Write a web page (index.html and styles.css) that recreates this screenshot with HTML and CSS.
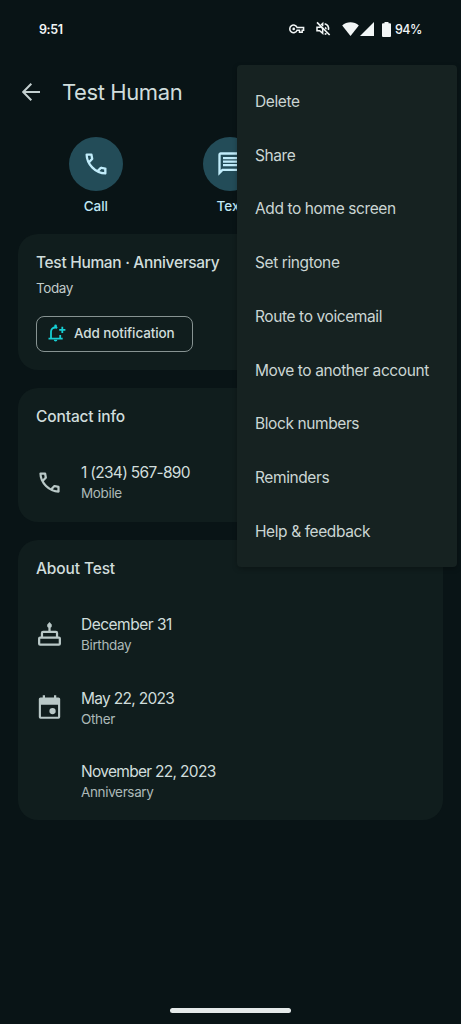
FILE: index.html
```html
<!DOCTYPE html>
<html lang="en">
<head>
<meta charset="utf-8">
<title>Test Human</title>
<link rel="stylesheet" href="styles.css">
</head>
<body>
<div class="screen">
  <header class="status">
    <span class="clock">9:51</span>
    <div class="indicators">
      <svg class="key" viewBox="0 0 16 10"><path d="M8.1 3.500H14.600V6.300H13.200V8.300H10.500V6.300H8.100A3.800 3.800 0 1 1 8.100 3.500Z" fill="none" stroke="currentColor" stroke-width="1.500"/><circle cx="4.700" cy="4.900" r="1.300" fill="currentColor"/></svg>
      <svg class="mute" viewBox="0 0 24 24"><path d="M3 2 22 21" stroke="currentColor" stroke-width="2.400"/><path d="M3 9.500v5h4l4.500 4v-7.500L8 8.500 7 9.500ZM9 6l2.500-2.200V8M15 9.500c1 .6 1.600 1.500 1.600 2.800M14.500 4c4.500 1.300 6.500 5 5.600 9.500M14.500 20c1-.3 1.900-.8 2.700-1.400" fill="none" stroke="currentColor" stroke-width="2.300"/></svg>
      <svg class="wifi" viewBox="0 0 17 14"><path d="M8.500 14 .2 3.600C4.700-.8 12.300-.8 16.800 3.600Z" fill="currentColor"/></svg>
      <svg class="signal" viewBox="0 0 14 14"><path d="M14 0V14H0Z" fill="currentColor"/></svg>
      <svg class="battery" viewBox="0 0 9 15"><path d="M2.500 0h4v1.300H8a1 1 0 0 1 1 1V14a1 1 0 0 1-1 1H1a1 1 0 0 1-1-1V2.300a1 1 0 0 1 1-1h1.500Z" fill="currentColor"/></svg>
      <span class="percent">94%</span>
    </div>
  </header>

  <div class="appbar">
    <svg class="back" viewBox="0 0 18 18"><path d="M18 9H1.500M9.300.8 1.200 9l8.100 8.200" fill="none" stroke="currentColor" stroke-width="2"/></svg>
    <h1 class="name">Test Human</h1>
  </div>

  <nav class="actions">
    <div class="action">
      <span class="disc"><svg viewBox="0 0 24 24"><path fill="currentColor" d="M19.950 21q-3.125 0-6.175-1.363t-5.550-3.862q-2.500-2.500-3.862-5.550T3 4.050q0-.45.3-.75t.75-.3H8.100q.35 0 .625.238t.325.562l.65 3.500q.05.4-.025.675T9.400 8.450L6.975 10.900q.5.925 1.187 1.787t1.513 1.663q.775.775 1.625 1.438T13.100 17l2.350-2.350q.225-.225.588-.338t.712-.062l3.450.7q.35.1.575.363T21 15.900v4.050q0 .45-.3.750t-.75.300M6.025 9l1.650-1.650L7.250 5H5.025q.125 1.025.35 2.025T6.025 9m8.950 8.950q.975.425 1.988.675T19 18.950v-2.200l-2.350-.475z"/></svg></span>
      <span class="label">Call</span>
    </div>
    <div class="action">
      <span class="disc"><svg viewBox="0 0 24 24"><path fill="currentColor" d="M2 22V4q0-.825.588-1.413T4 2h16q.825 0 1.413.588T22 4v12q0 .825-.588 1.413T20 18H6zM4 17.200 5.200 16H20V4H4zM6 14h12v-2H6zm0-3h12V9H6zm0-3h12V6H6z"/></svg></span>
      <span class="label">Text</span>
    </div>
  </nav>

  <main class="cards">
    <section class="card event">
      <h2>Test Human · Anniversary</h2>
      <p class="when">Today</p>
      <button class="notify">
        <svg viewBox="0 0 18 18"><g fill="none" stroke="currentColor" stroke-width="1.800"><path d="M.5 14.700H14.700M3 14.700V7.800C3 5 4.600 3.500 7.600 3.500c.7 0 1.200.1 1.700.3M12.200 14.700V11M14.300 2.800v6.200M11.200 5.900h6.200"/></g><path fill="currentColor" d="M6.300 3.500V1.700a1.300 1.300 0 0 1 2.600 0v1.800ZM5.800 15.700h3.600a1.800 1.800 0 0 1-3.600 0Z"/></svg>
        <span>Add notification</span>
      </button>
    </section>

    <section class="card contact">
      <h2>Contact info</h2>
      <div class="row">
        <svg viewBox="0 0 24 24"><path fill="currentColor" d="M19.950 21q-3.125 0-6.175-1.363t-5.550-3.862q-2.500-2.500-3.862-5.550T3 4.050q0-.45.3-.75t.75-.3H8.100q.35 0 .625.238t.325.562l.65 3.500q.05.4-.025.675T9.400 8.450L6.975 10.900q.5.925 1.187 1.787t1.513 1.663q.775.775 1.625 1.438T13.100 17l2.350-2.350q.225-.225.588-.338t.712-.062l3.450.7q.35.1.575.363T21 15.900v4.050q0 .45-.3.750t-.75.300M6.025 9l1.650-1.650L7.250 5H5.025q.125 1.025.35 2.025T6.025 9m8.950 8.950q.975.425 1.988.675T19 18.950v-2.200l-2.350-.475z"/></svg>
        <div class="detail"><span class="value date">1 (234) 567-890</span><span class="kind">Mobile</span></div>
      </div>
    </section>

    <section class="card about">
      <h2>About Test</h2>
      <div class="row">
        <svg viewBox="0 0 24 24"><g fill="none" stroke="currentColor" stroke-width="2"><rect x="2.800" y="14.800" width="18.400" height="6.200" rx=".8"/><path d="M5.300 15v-4.400q0-1 1-1h11.400q1 0 1 1V15M12 9.600V5"/></g><path fill="currentColor" d="M12 .8 13.900 3.200Q14.700 5.900 12 6.300 9.300 5.900 10.100 3.200Z"/></svg>
        <div class="detail"><span class="value">December 31</span><span class="kind">Birthday</span></div>
      </div>
      <div class="row">
        <svg viewBox="0 0 24 24"><path fill="currentColor" fill-rule="evenodd" d="M4 3h2V1h2v2h8V1h2v2h2q1.500 0 1.500 1.500v16q0 1.500-1.500 1.500H4q-1.500 0-1.500-1.500v-16Q2.500 3 4 3Zm.4 6.500v10.700h15.200V9.500Z"/><circle cx="14.700" cy="15.200" r="2.800" fill="currentColor"/></svg>
        <div class="detail"><span class="value date">May 22, 2023</span><span class="kind">Other</span></div>
      </div>
      <div class="row">
        <span class="no-icon"></span>
        <div class="detail"><span class="value date">November 22, 2023</span><span class="kind">Anniversary</span></div>
      </div>
    </section>
  </main>

  <footer class="gesture"><span class="handle"></span></footer>

  <ul class="menu">
    <li>Delete</li>
    <li>Share</li>
    <li>Add to home screen</li>
    <li>Set ringtone</li>
    <li>Route to voicemail</li>
    <li>Move to another account</li>
    <li>Block numbers</li>
    <li>Reminders</li>
    <li>Help &amp; feedback</li>
  </ul>
</div>
</body>
</html>
```
FILE: styles.css
```css
* { box-sizing: border-box; margin: 0; padding: 0; }

body {
  background: #091416;
  color: #d0dddc;
  font-family: Inter, "Open Sans", sans-serif;
}

svg { display: block; flex: none; }

.screen {
  position: relative;
  display: flex;
  flex-direction: column;
  width: 461px;
  height: 1024px;
  overflow: hidden;
}

.status {
  display: flex;
  justify-content: space-between;
  align-items: center;
  height: 58px;
  padding: 0 39px;
  color: #f2f6f6;
  font-size: 12.5px;
  font-weight: 600;
}
.clock { letter-spacing: -0.4px; }
.indicators { display: flex; align-items: center; }
.key { width: 16px; height: 10px; margin-right: 10px; }
.mute { width: 16px; height: 16px; margin-right: 11px; }
.wifi { width: 17px; height: 14px; margin-right: 1px; }
.signal { width: 14px; height: 14px; margin-right: 8px; }
.battery { width: 9px; height: 15px; margin-right: 4px; }
.percent { width: 27px; font-weight: 500; letter-spacing: -0.5px; }

.appbar {
  display: flex;
  align-items: center;
  gap: 22px;
  height: 68px;
  padding: 0 22px;
}
.back { width: 18px; height: 18px; color: #c3cfcf; }
.name { font-size: 22px; font-weight: 400; letter-spacing: -0.4px; }

.actions {
  display: grid;
  grid-template-columns: repeat(3, 1fr);
  height: 108px;
  padding: 11px 28.5px 0;
}
.action { display: flex; flex-direction: column; align-items: center; gap: 6px; }
.disc {
  display: grid;
  place-items: center;
  width: 54px;
  height: 54px;
  border-radius: 50%;
  background: #234c58;
  color: #c1ecfa;
}
.disc svg { width: 28px; height: 28px; }
.label { color: #bfe6f4; font-size: 13.5px; font-weight: 500; line-height: 18px; }

.cards { display: flex; flex-direction: column; gap: 18px; padding: 0 18px; }
.card { padding: 18px; border-radius: 20px; background: #101d1d; }
.card h2 { font-size: 15.5px; font-weight: 500; line-height: 22px; letter-spacing: -0.13px; }
.event { height: 136px; margin-top: -0.5px; }
.event h2 { letter-spacing: -0.32px; }
.contact { height: 134px; }
.about { height: 280.5px; }

.when { margin-top: 4px; color: #c0cbca; font-size: 13.5px; line-height: 20px; letter-spacing: -0.4px; }
.notify {
  display: flex;
  align-items: center;
  gap: 8px;
  width: 156.500px;
  height: 36px;
  margin-top: 18px;
  padding: 0 11px 1px;
  border: 1px solid #879392;
  border-radius: 8px;
  background: none;
  color: #d0dddc;
  font: 500 13.5px Inter, sans-serif;
  letter-spacing: -0.12px;
  white-space: nowrap;
}
.notify svg { width: 18px; height: 18px; color: #16ced3; }

.row { display: flex; align-items: center; gap: 18px; height: 73.5px; }
.card h2 + .row { margin-top: 18px; }
.row svg, .no-icon { width: 27px; height: 27px; color: #b9c8c7; }
.detail { display: flex; flex-direction: column; padding-top: 1px; }
.value { font-size: 15.5px; line-height: 21px; letter-spacing: -0.5px; }
.date { letter-spacing: -0.7px; }
.kind { color: #acb9b8; font-size: 13.5px; line-height: 20px; letter-spacing: -0.35px; }

.gesture { display: flex; justify-content: center; margin-top: auto; padding-bottom: 11px; }
.handle { width: 121px; height: 5px; border-radius: 3px; background: #e5eaea; }

.menu {
  position: absolute;
  top: 65px;
  left: 237px;
  width: 220px;
  height: 502px;
  padding: 9.5px 18px 8.5px;
  border-radius: 4px;
  background: #162221;
  box-shadow: 0 2px 5px rgb(0 0 0 / 25%);
  color: #cbd6d4;
  list-style: none;
}
.menu li {
  display: flex;
  align-items: center;
  height: 53.75px;
  font-size: 15.5px;
  letter-spacing: -0.4px;
  white-space: nowrap;
}
```
